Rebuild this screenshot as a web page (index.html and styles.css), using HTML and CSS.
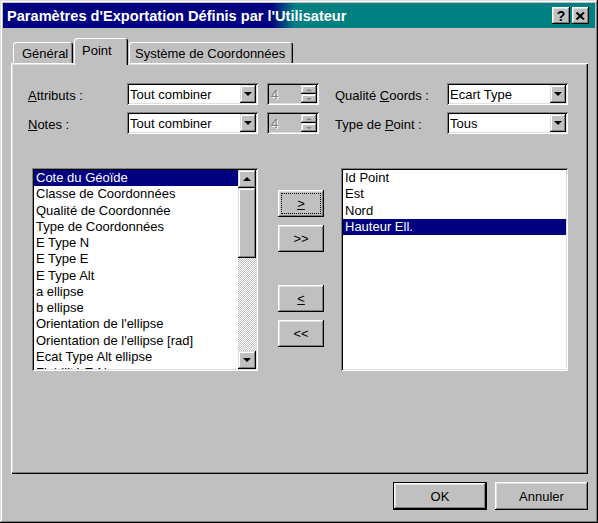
FILE: index.html
```html
<!DOCTYPE html>
<html lang="fr">
<head>
    <meta charset="UTF-8" />
    <title>Paramètres d'Exportation Définis par l'Utilisateur</title>
    <link rel="stylesheet" href="styles.css">
</head>
<body>
    <div class="window">
        <div class="titlebar">
            <span class="title">Paramètres d'Exportation Définis par l'Utilisateur</span>
            <div class="title-buttons">
                <span class="tbtn help">?</span>
                <span class="tbtn close">
                    <svg width="9" height="8" viewBox="0 0 9 8">
                        <path d="M0.5 0.5 L8 7.5 M8 0.5 L0.5 7.5" stroke="#000" stroke-width="2" fill="none" />
                    </svg>
                </span>
            </div>
        </div>

        <div class="tabs">
            <div class="tab tab-general">Général</div>
            <div class="tab tab-point active">Point</div>
            <div class="tab tab-systeme">Système de Coordonnées</div>
        </div>

        <div class="panel">
            <div class="opt-row">
                <span class="lbl"><u>A</u>ttributs :</span>
                <div class="combo">
                    <span class="combo-text">Tout combiner</span>
                    <span class="drop"><span class="arrow-down"></span></span>
                </div>
                <div class="spin">
                    <span class="spin-text">4</span>
                    <span class="spin-btns">
                        <span class="spin-btn"><span class="tri-up small"></span></span>
                        <span class="spin-btn"><span class="tri-down small"></span></span>
                    </span>
                </div>
                <span class="lbl lbl-right">Qualité <u>C</u>oords :</span>
                <div class="combo combo-right">
                    <span class="combo-text">Ecart Type</span>
                    <span class="drop"><span class="arrow-down"></span></span>
                </div>
            </div>
            <div class="opt-row">
                <span class="lbl"><u>N</u>otes :</span>
                <div class="combo">
                    <span class="combo-text">Tout combiner</span>
                    <span class="drop"><span class="arrow-down"></span></span>
                </div>
                <div class="spin">
                    <span class="spin-text">4</span>
                    <span class="spin-btns">
                        <span class="spin-btn"><span class="tri-up small"></span></span>
                        <span class="spin-btn"><span class="tri-down small"></span></span>
                    </span>
                </div>
                <span class="lbl lbl-right">Type de <u>P</u>oint :</span>
                <div class="combo combo-right">
                    <span class="combo-text">Tous</span>
                    <span class="drop"><span class="arrow-down"></span></span>
                </div>
            </div>

            <div class="lists">
                <div class="listbox list-left">
                    <div class="items">
                        <div class="item selected">Cote du Géoïde</div>
                        <div class="item">Classe de Coordonnées</div>
                        <div class="item">Qualité de Coordonnée</div>
                        <div class="item">Type de Coordonnées</div>
                        <div class="item">E Type N</div>
                        <div class="item">E Type E</div>
                        <div class="item">E Type Alt</div>
                        <div class="item">a ellipse</div>
                        <div class="item">b ellipse</div>
                        <div class="item">Orientation de l'ellipse</div>
                        <div class="item">Orientation de l'ellipse [rad]</div>
                        <div class="item">Ecat Type Alt ellipse</div>
                        <div class="item">Fiabilité E-N</div>
                    </div>
                    <div class="scrollbar">
                        <span class="sb-btn"><span class="tri-up"></span></span>
                        <span class="sb-thumb"></span>
                        <span class="sb-track"></span>
                        <span class="sb-btn"><span class="tri-down"></span></span>
                    </div>
                </div>

                <div class="move-buttons">
                    <button class="btn move focus"><span class="focus-ring"><u>&gt;</u></span></button>
                    <button class="btn move">&gt;&gt;</button>
                    <button class="btn move move-back"><u>&lt;</u></button>
                    <button class="btn move">&lt;&lt;</button>
                </div>

                <div class="listbox list-right">
                    <div class="items">
                        <div class="item">Id Point</div>
                        <div class="item">Est</div>
                        <div class="item">Nord</div>
                        <div class="item selected">Hauteur Ell.</div>
                    </div>
                </div>
            </div>
        </div>

        <div class="footer">
            <button class="btn btn-ok">OK</button>
            <button class="btn btn-cancel">Annuler</button>
        </div>
    </div>
</body>
</html>
```

FILE: styles.css
```css
* {
  box-sizing: border-box;
}

body {
  margin: 0;
  background-color: #c0c0c0;
  font-family: "Liberation Sans", Arial, sans-serif;
  font-size: 13px;
  color: #000;
}

u {
  text-decoration: underline;
  text-underline-offset: 1px;
}

.window {
  width: 598px;
  height: 523px;
  padding: 3px;
  display: flex;
  flex-direction: column;
  background-color: #c0c0c0;
  box-shadow: inset -1px -1px #000, inset 1px 1px #dfdfdf,
    inset -2px -2px #808080, inset 2px 2px #fff;
}

/* title bar */
.titlebar {
  height: 25px;
  display: flex;
  align-items: center;
  justify-content: space-between;
  padding: 0 6px 0 4px;
  background: linear-gradient(to right, #000080 0, #000080 268px, #008080 292px, #008080 100%);
  color: #fff;
  font-weight: bold;
  font-size: 14.6px;
}

.title-buttons {
  display: flex;
  gap: 2px;
}

.tbtn {
  width: 18px;
  height: 17px;
  display: flex;
  align-items: center;
  justify-content: center;
  background-color: #c0c0c0;
  color: #000;
  font-size: 14px;
  font-weight: bold;
  box-shadow: inset -1px -1px #000, inset 1px 1px #fff,
    inset -2px -2px #808080, inset 2px 2px #dfdfdf;
}

.tbtn.close {
  width: 17px;
}

/* tabs */
.tabs {
  height: 25px;
  margin-top: 10px;
  padding-left: 10px;
  display: flex;
  align-items: flex-end;
  gap: 1px;
}

.tab {
  height: 21px;
  padding-top: 4px;
  line-height: 15px;
  background-color: #c0c0c0;
  border-radius: 3px 3px 0 0;
  box-shadow: inset 1px 1px #fff, inset -1px 0 #000, inset -2px 0 #808080;
}

.tab-general {
  width: 60px;
  padding-left: 9px;
}

.tab-point {
  width: 54px;
  padding-left: 8px;
}

.tab-systeme {
  width: 164px;
  padding-left: 6px;
}

.tab.active {
  position: relative;
  z-index: 1;
  height: 27px;
  padding-top: 5px;
  margin-bottom: -2px;
}

/* panel */
.panel {
  height: 411px;
  margin: 0 7px 0 8px;
  padding-top: 20px;
  background-color: #c0c0c0;
  box-shadow: inset 1px 1px #fff, inset -1px -1px #000,
    inset -2px -2px #808080, inset 2px 2px #dfdfdf;
}

.opt-row {
  height: 22px;
  margin-bottom: 7px;
  padding-left: 17px;
  display: flex;
  align-items: center;
}

.lbl {
  width: 99px;
  padding-top: 3px;
}

.lbl-right {
  width: 112px;
  margin-left: 16px;
}

.combo {
  width: 131px;
  height: 22px;
  padding: 2px;
  display: flex;
  align-items: center;
  background-color: #fff;
  box-shadow: inset 1px 1px #808080, inset -1px -1px #fff,
    inset 2px 2px #000, inset -2px -2px #dfdfdf;
}

.combo-right {
  width: 121px;
}

.combo-text {
  flex: 1;
  padding: 1px 0 0 1px;
}

.drop {
  width: 16px;
  height: 18px;
  display: flex;
  align-items: center;
  justify-content: center;
  background-color: #c0c0c0;
  box-shadow: inset -1px -1px #000, inset 1px 1px #dfdfdf,
    inset -2px -2px #808080, inset 2px 2px #fff;
}

.arrow-down,
.tri-down {
  width: 0;
  height: 0;
  border-left: 4px solid transparent;
  border-right: 4px solid transparent;
  border-top: 4px solid #000;
}

.tri-up {
  width: 0;
  height: 0;
  border-left: 4px solid transparent;
  border-right: 4px solid transparent;
  border-bottom: 4px solid #000;
}

.tri-up.small {
  border-width: 0 3px 2px;
  border-bottom-color: #808080;
}

.tri-down.small {
  border-width: 2px 3px 0;
  border-top-color: #808080;
}

.spin {
  width: 52px;
  height: 22px;
  margin-left: 9px;
  padding: 2px;
  display: flex;
  background-color: #c0c0c0;
  box-shadow: inset 1px 1px #808080, inset -1px -1px #fff,
    inset 2px 2px #000, inset -2px -2px #dfdfdf;
}

.spin-text {
  flex: 1;
  padding-left: 2px;
  line-height: 19px;
  color: #808080;
  text-shadow: 1px 1px #fff;
}

.spin-btns {
  width: 16px;
  display: flex;
  flex-direction: column;
}

.spin-btn {
  height: 9px;
  display: flex;
  align-items: center;
  justify-content: center;
  box-shadow: inset -1px -1px #000, inset 1px 1px #dfdfdf,
    inset -2px -2px #808080, inset 2px 2px #fff;
}

/* lists */
.lists {
  display: flex;
  margin-top: 34px;
  padding-left: 21px;
}

.listbox {
  height: 203px;
  padding: 2px;
  display: flex;
  background-color: #fff;
  overflow: hidden;
  box-shadow: inset 1px 1px #808080, inset -1px -1px #fff,
    inset 2px 2px #000, inset -2px -2px #dfdfdf;
}

.list-left {
  width: 226px;
}

.list-right {
  width: 227px;
  margin-left: 17px;
}

.items {
  flex: 1;
  overflow: hidden;
}

.item {
  height: 16.25px;
  line-height: 16.25px;
  padding-left: 2px;
  white-space: nowrap;
}

.item.selected {
  background-color: #000080;
  color: #fff;
}

.scrollbar {
  width: 18px;
  display: flex;
  flex-direction: column;
}

.sb-btn {
  height: 18px;
  display: flex;
  align-items: center;
  justify-content: center;
  background-color: #c0c0c0;
  box-shadow: inset -1px -1px #000, inset 1px 1px #dfdfdf,
    inset -2px -2px #808080, inset 2px 2px #fff;
}

.sb-thumb {
  height: 70px;
  background-color: #c0c0c0;
  box-shadow: inset -1px -1px #000, inset 1px 1px #dfdfdf,
    inset -2px -2px #808080, inset 2px 2px #fff;
}

.sb-track {
  flex: 1;
  background: repeating-conic-gradient(#c0c0c0 0 25%, #fff 0 50%) 0 0 / 2px 2px;
}

.move-buttons {
  width: 46px;
  margin-left: 20px;
  padding-top: 22px;
  display: flex;
  flex-direction: column;
  gap: 8px;
}

/* buttons */
.btn {
  padding: 0;
  border: none;
  background-color: #c0c0c0;
  font-family: inherit;
  font-size: 13px;
  color: #000;
  box-shadow: inset -1px -1px #000, inset 1px 1px #fff,
    inset -2px -2px #808080, inset 2px 2px #dfdfdf;
}

.move {
  height: 27px;
}

.move-back {
  margin-top: 25px;
}

.move.focus {
  padding: 4px;
}

.focus-ring {
  display: flex;
  align-items: center;
  justify-content: center;
  height: 100%;
  outline: 1px dotted #000;
}

.footer {
  height: 28px;
  margin-top: 8px;
  padding-right: 7px;
  display: flex;
  justify-content: flex-end;
  gap: 8px;
}

.btn-ok {
  width: 94px;
  box-shadow: inset 0 0 0 1px #000, inset -2px -2px #000, inset 2px 2px #fff,
    inset -3px -3px #808080, inset 3px 3px #dfdfdf;
}

.btn-cancel {
  width: 93px;
}
```
